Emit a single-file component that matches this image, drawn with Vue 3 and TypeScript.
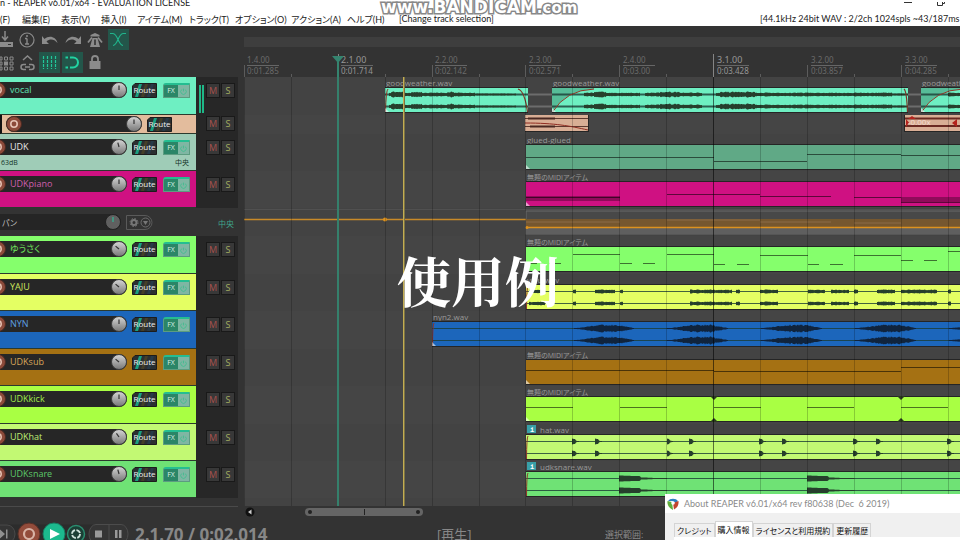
<script setup lang="ts">
type Shape = 'flat' | 'decay' | 'swell'
interface Wave { from: number; to: number; amp: number; shape?: Shape }
interface Note { from: number; to: number; y: number; h?: number }
interface Clip {
  from: number
  to: number
  label?: string
  badge?: boolean
  color?: string
  channels?: boolean
  waves?: Wave[]
  notes?: Note[]
  fadeIn?: number
  fadeOut?: number
  corner?: boolean
  notches?: number[]
}
interface Track {
  kind: 'track' | 'child' | 'envelope'
  name: string
  height: number
  color: string
  text: string
  turn?: number
  volume?: string
  pan?: string
  meter?: boolean
  clips: Clip[]
}

const END = 3000
const ORIGIN = 244
const BEAT = 46.9
const midi = '無題のMIDIアイテム'

const waves = (amp: number, shape: Shape, ...pairs: number[][]): Wave[] =>
  pairs.map(([from, to]) => ({ from, to, amp, shape }))
const notes = (...rows: number[][]): Note[] =>
  rows.map(([from, to, y, h]) => ({ from, to, y, h }))

const tracks: Track[] = [
  {
    kind: 'track', name: 'vocal', height: 38, color: '#6eefc2', text: '#5fe0b4', turn: 0, meter: true,
    clips: [
      {
        from: 385, to: 528, label: 'goodweather.wav', channels: true, fadeIn: 3, fadeOut: 10, corner: true,
        waves: [...waves(3, 'flat', [391, 403], [411, 422], [447, 454]), ...waves(2, 'flat', [389, 475]), ...waves(1, 'flat', [475, 516])],
      },
      {
        from: 552, to: 908, label: 'goodweather.wav', channels: true, fadeIn: 42, fadeOut: 4, corner: true,
        waves: [...waves(2, 'flat', [584, 640], [645, 702], [716, 780]), ...waves(3, 'flat', [594, 606], [660, 680], [720, 755]), ...waves(2, 'flat', [780, 892]), ...waves(1, 'flat', [892, 908])],
      },
      {
        from: 921, to: END, label: 'goodweather.wav', channels: true, fadeIn: 42, corner: true,
        waves: waves(2, 'flat', [948, 1100]),
      },
    ],
  },
  { kind: 'child', name: '', height: 19, color: '#e3bc9d', text: '#e3bc9d', turn: 0, clips: [] },
  {
    kind: 'track', name: 'UDK', height: 37, color: '#9fccb7', text: '#e6e6e6', turn: -15, volume: '63dB', pan: '中央',
    clips: [{ from: 526, to: END, label: 'glued-glued', color: '#60a986', corner: true, notes: notes([526, 714, 12], [714, 807, 16], [807, 901, 9], [901, END, 10]) }],
  },
  {
    kind: 'track', name: 'UDKpiano', height: 37, color: '#cf1182', text: '#cf5fae', turn: 0,
    clips: [{
      from: 526, to: END, label: midi, corner: true,
      notes: notes([526, 620, 14, 5], [526, 620, 15], [667, 760, 12], [760, 784, 14], [784, 831, 14], [854, 901, 15], [901, END, 15, 5], [901, END, 20]),
    }],
  },
  { kind: 'envelope', name: 'パン', height: 28, color: '#333333', text: '#bdbdbd', clips: [] },
  {
    kind: 'track', name: 'ゆうさく', height: 38, color: '#85ff6c', text: '#6fe05c', turn: -50,
    clips: [{
      from: 526, to: END, label: midi, corner: true,
      notes: notes([526, 537, 16], [549, 561, 16], [573, 620, 7], [620, 632, 16], [643, 655, 16], [667, 714, 7], [714, 725, 17], [737, 749, 17], [760, 808, 8], [808, 819, 17], [830, 843, 17], [854, 901, 8], [901, 913, 13], [924, 937, 13], [948, END, 4]),
    }],
  },
  {
    kind: 'track', name: 'YAJU', height: 37, color: '#e4ff63', text: '#d0e85e', turn: -50,
    clips: [{
      from: 526, to: END, label: 'yaju.wav', channels: true, fadeIn: 2,
      waves: waves(2, 'flat', [529, 545], [573, 576], [595, 615], [620, 623], [690, 732], [736, 740], [760, 778], [808, 825], [831, 849], [854, 858], [877, 895], [901, 937], [948, 951]),
    }],
  },
  {
    kind: 'track', name: 'NYN', height: 38, color: '#1c66bb', text: '#5c9fe0', turn: 0,
    clips: [{
      from: 432, to: END, label: 'nyn2.wav', channels: true, fadeIn: 2, corner: true,
      waves: waves(4, 'swell', [574, 634], [667, 728], [761, 822], [855, 916], [949, 1010]),
    }],
  },
  {
    kind: 'track', name: 'UDKsub', height: 37, color: '#a57113', text: '#d9a75a', turn: -50,
    clips: [{ from: 526, to: END, label: midi, corner: true, notes: notes([526, 714, 10], [714, 901, 11], [901, END, 7]) }],
  },
  {
    kind: 'track', name: 'UDKkick', height: 38, color: '#a9ff43', text: '#a0ea4c', turn: 0,
    clips: [{
      from: 526, to: END, label: midi, corner: true, notches: [714, 901],
      notes: notes([526, 573, 10], [620, 667, 10], [714, 761, 10], [807, 854, 10], [901, 948, 10]),
    }],
  },
  {
    kind: 'track', name: 'UDKhat', height: 37, color: '#c2f973', text: '#bfee74', turn: -35,
    clips: [{
      from: 526, to: END, label: 'hat.wav', badge: true, channels: true, fadeIn: 2,
      waves: waves(3, 'decay', [572, 579], [595, 602], [667, 673], [689, 696], [759, 766], [782, 789], [853, 860], [876, 883], [947, 954]),
    }],
  },
  {
    kind: 'track', name: 'UDKsnare', height: 37, color: '#6fe275', text: '#5cc96a', turn: -15,
    clips: [{
      from: 526, to: END, label: 'udksnare.wav', badge: true, channels: true, fadeIn: 2,
      waves: waves(3, 'decay', [619, 667], [807, 854]),
    }],
  },
]

const beats = Array.from({ length: 44 }, (_, i) => Math.round(ORIGIN + i * BEAT))
const marks = [
  { x: 244, bar: '1.4.00', time: '0:01.285', major: false },
  { x: 338, bar: '2.1.00', time: '0:01.714', major: true },
  { x: 432, bar: '2.2.00', time: '0:02.142', major: false },
  { x: 526, bar: '2.3.00', time: '0:02.571', major: false },
  { x: 620, bar: '2.4.00', time: '0:03.00', major: false },
  { x: 714, bar: '3.1.00', time: '0:03.428', major: true },
  { x: 808, bar: '3.2.00', time: '0:03.857', major: false },
  { x: 902, bar: '3.3.00', time: '0:04.285', major: false },
]
const menus = ['(F)', '編集(E)', '表示(V)', '挿入(I)', 'アイテム(M)', 'トラック(T)', 'オプション(O)', 'アクション(A)', 'ヘルプ(H)']
const tabs = ['クレジット', '購入情報', 'ライセンスと利用規約', '更新履歴']

/** Outline of a waveform burst mirrored around the channel line at y. */
function wavePath(w: Wave, y: number): string {
  const top: string[] = []
  const bottom: string[] = []
  for (let x = w.from; x <= w.to; x++) {
    const t = (x - w.from) / (w.to - w.from)
    const hash = Math.abs(Math.sin(x * 127.1) * 43758.5) % 1
    const noise = 0.6 + 0.4 * hash
    let h = w.amp * noise
    if (w.shape === 'swell') h = w.amp * Math.min(1, Math.sin(Math.PI * Math.pow(t, 1.3)) + 0.1) * noise
    if (w.shape === 'decay') h = w.amp * (t < 0.45 ? 1 - t * 0.5 : (1 - t) * 0.7)
    h = Math.max(h, 0.6)
    top.push(`${x},${(y - h).toFixed(1)}`)
    bottom.unshift(`${x},${(y + h).toFixed(1)}`)
  }
  return 'M' + top.concat(bottom).join('L') + 'Z'
}
</script>

<template>
  <div class="app">
    <header class="title">
      <span>n - REAPER v6.01/x64 - EVALUATION LICENSE</span>
      <span class="winctl">
        <button aria-label="Minimize"><svg width="10" height="10"><path d="M1 0.500h8" stroke="#333" /></svg></button>
        <button aria-label="Maximize"><svg width="10" height="10"><path d="M1.500 -3V3.500H6.500V-3M3 -3H8.500V1.500H7" stroke="#333" fill="none" /></svg></button>
      </span>
    </header>
    <nav class="menu">
      <button v-for="m in menus" :key="m">{{ m }}</button>
      <span>[Change track selection]</span>
      <span class="device">[44.1kHz 24bit WAV : 2/2ch 1024spls ~43/187ms Wa</span>
    </nav>

    <main class="work">
      <section class="left">
        <div class="tools">
          <button aria-label="Save"><svg viewBox="0 0 14 21"><path d="M5 2V10M2 7.500L5 11L8 7.500" stroke="#8b8b8b" stroke-width="1.500" fill="none" /><path d="M0 13H13V18H0Z" fill="#8b8b8b" /><path d="M8 15.500h3" stroke="#333" /></svg></button>
          <button aria-label="Info"><svg viewBox="0 0 21 21"><circle cx="11" cy="11" r="7" fill="none" stroke="#8b8b8b" stroke-width="1.200" /><path d="M11 9.500V15M9 9.500h2M9 15h4" stroke="#8b8b8b" stroke-width="1.400" /><circle cx="11" cy="7" r="1" fill="#8b8b8b" /></svg></button>
          <button aria-label="Undo"><svg viewBox="0 0 21 21"><path d="M3 7V15H10L7.500 12.500C11 9.500 15 10 18.500 14C17 7.500 10 6 5.500 10Z" fill="#8b8b8b" /></svg></button>
          <button aria-label="Redo"><svg viewBox="0 0 21 21"><path d="M19 7V15H12L14.500 12.500C11 9.500 7 10 3.500 14C5 7.500 12 6 16.500 10Z" fill="#8b8b8b" /></svg></button>
          <button aria-label="Metronome"><svg viewBox="0 0 21 21"><path d="M5.500 6L10 4L14.500 6V7.500H5.500Z" fill="#8b8b8b" /><path d="M7.500 9H12.500L15 18H5Z" fill="#8b8b8b" /><path d="M3 13.500L7 8.500M17 13.500L13 8.500" stroke="#8b8b8b" stroke-width="1.800" /><path d="M10 10.500V16" stroke="#333" stroke-width="1.600" /></svg></button>
          <button class="on" aria-label="Crossfade"><svg viewBox="0 0 21 21"><path d="M2 4.500H5C10 5 10 16 15 16.500M18 4.500H15C10 5 10 16 5 16.500" stroke="#21b48c" stroke-width="1.200" fill="none" /></svg></button>
          <button aria-label="Grouping"><svg viewBox="0 0 14 21"><path d="M0 5H2V8H0ZM4.500 5H7.500V8H4.500ZM10 5H13V8H10ZM0 10H2V13H0ZM10 10H13V13H10ZM0 15H2V18H0ZM4.500 15H7.500V18H4.500ZM10 15H13V18H10Z" fill="none" stroke="#8b8b8b" /><path d="M4 9.500h4v4h-4z" fill="#8b8b8b" /></svg></button>
          <button aria-label="Ripple"><svg viewBox="0 0 21 21"><path d="M7 8L11.500 4L16 8M10 12.500H7.500A2.500 2.500 0 0 0 7.500 17.500H10M13 12.500H15.500A2.500 2.500 0 0 1 15.500 17.500H13M9 15H14" stroke="#8b8b8b" stroke-width="1.500" fill="none" /></svg></button>
          <button class="on" aria-label="Grid"><svg viewBox="0 0 21 21"><path d="M4.500 4V17M8.500 4V17M12.500 4V17M16.500 4V17" stroke="#21c79a" stroke-width="1.200" stroke-dasharray="3 1" /></svg></button>
          <button class="on" aria-label="Snap"><svg viewBox="0 0 21 21"><path d="M8 5.500H11A5 5 0 0 1 11 15.500H8M3.500 5.500H6M3.500 15.500H6" stroke="#21d3a2" stroke-width="2" fill="none" /></svg></button>
          <button aria-label="Lock"><svg viewBox="0 0 21 21"><path d="M4.500 9H15.500V17H4.500Z" fill="#8b8b8b" /><path d="M7 9V7A3 3 0 0 1 13 7V9" stroke="#8b8b8b" stroke-width="1.800" fill="none" /></svg></button>
        </div>

        <div class="tcp">
          <article v-for="(t, i) in tracks" :key="i" class="track" :class="t.kind" :style="{ height: t.height + 'px' }">
            <template v-if="t.kind !== 'envelope'">
              <div class="strip" :style="{ background: t.color }">
                <div class="controls">
                  <div class="bar">
                    <button class="rec" aria-label="Record arm"><svg viewBox="0 0 16 16"><circle cx="8" cy="8" r="7.500" fill="#8c4a3a" stroke="#4b2a22" /><circle cx="8" cy="8" r="3.200" fill="none" stroke="#e6c2b4" stroke-width="1.600" /></svg></button>
                    <span class="name" :style="{ color: t.text }">{{ t.name }}</span>
                    <label class="knob">
                      <svg viewBox="0 0 16 16"><defs><linearGradient :id="'k' + i" x1="0" y1="0" x2="0" y2="1"><stop offset="0" stop-color="#d6d6d6" /><stop offset="1" stop-color="#777" /></linearGradient></defs><circle cx="8" cy="8" r="7.500" :fill="`url(#k${i})`" stroke="#3c3c3c" /><path d="M8 3.500V8" stroke="#333" stroke-width="1.200" :transform="`rotate(${t.turn} 8 8)`" /></svg>
                      <input type="range" aria-label="Volume">
                    </label>
                  </div>
                  <button class="route">
                    <svg viewBox="0 0 25 15"><path d="M3 0.500H24.500V14.500H0.500V3Z" fill="#2b2f31" stroke="#1c1c1c" /><path d="M7 1h3l-4 13h-3z" fill="#1a9f80" /><path d="M13 1h3l-4 13h-3z" fill="#453f28" /><path d="M19 1h3l-4 13h-3z" fill="#273a48" /></svg>
                    <span>Route</span>
                  </button>
                  <span v-if="t.kind === 'track'" class="fx">
                    <button class="fxlabel">FX</button><button class="fxpower" aria-label="FX bypass"><svg viewBox="0 0 12 14"><path d="M4 5A3 3 0 1 0 8 5M6 4V7" fill="none" stroke="#45bd90" /></svg></button>
                  </span>
                </div>
                <div v-if="t.volume" class="readout"><span>{{ t.volume }}</span><span>{{ t.pan }}</span></div>
              </div>
              <div class="side">
                <div class="meter"><template v-if="t.meter"><i /><i /></template></div>
                <button class="m">M</button><button class="s">S</button>
              </div>
            </template>
            <template v-else>
              <div class="envbar">
                <span>{{ t.name }}</span>
                <label class="knob">
                  <svg viewBox="0 0 16 16"><circle cx="8" cy="8" r="7.500" fill="#606060" stroke="#222" /><path d="M8 3V8" stroke="#2fb896" stroke-width="1.200" /></svg>
                  <input type="range" aria-label="Pan">
                </label>
              </div>
              <button class="envbtn" aria-label="Envelope options"><svg viewBox="0 0 27 15"><path d="M0.500 0.500H19A7 7 0 0 1 19 14.500H0.500Z" fill="none" stroke="#5a5a5a" /><circle cx="8" cy="7.500" r="2.500" fill="none" stroke="#777" stroke-width="2" /><circle cx="8" cy="7.500" r="4" fill="none" stroke="#777" stroke-dasharray="1.600 1.540" /><circle cx="19.500" cy="7.500" r="4.500" fill="none" stroke="#6c6c6c" /><path d="M17 6H22L19.500 10Z" fill="#777" /></svg></button>
              <span class="envval">中央</span>
            </template>
          </article>
        </div>
      </section>

      <section class="arrange">
        <div class="ruler">
          <svg width="100%" height="51">
            <rect y="11" width="100%" height="10" fill="#3e3e3e" />
            <g :transform="`translate(${-ORIGIN})`">
              <path v-for="(x, i) in beats" :key="x" :d="`M${x}.5 ${i % 2 ? 48 : i % 8 === 2 ? 28 : 39}V51`" :stroke="i % 8 === 2 ? '#858585' : '#5c5c5c'" />
              <g v-for="m in marks" :key="m.x" :class="{ major: m.major }" class="mark">
                <text :x="m.x + 3" y="37">{{ m.bar }}</text>
                <path :d="`M${m.x + 3} 39.500h32`" stroke="#666" />
                <text :x="m.x + 3" y="48">{{ m.time }}</text>
              </g>
              <path d="M332 30H344L338 37Z" fill="#35846f" />
              <path d="M338 36V51" stroke="#35846f" stroke-width="2" />
            </g>
          </svg>
        </div>
        <div class="lanes">
          <div v-for="(t, i) in tracks" :key="i" class="lane" :style="{ height: t.height + 'px' }">
            <svg width="100%" height="100%">
              <g :transform="`translate(${-ORIGIN})`">
                <g v-for="c in t.clips" :key="c.from">
                  <text v-if="c.label" class="cliplabel" :class="{ jp: c.label === midi }" :x="c.from + (c.badge ? 14 : 1)" y="9">{{ c.label }}</text>
                  <g v-if="c.badge"><rect :x="c.from + 1" y="1" width="9" height="8" fill="#38a0a8" /><text class="badge" :x="c.from + 4" y="8">i</text></g>
                  <rect :x="c.from" y="10" :width="c.to - c.from" height="26" fill="#252525" />
                  <rect :x="c.from" y="11" :width="c.to - c.from" height="24" :fill="c.color || t.color" />
                  <path v-if="c.fadeIn && c.fadeIn > 10" :d="`M${c.from} 35Q${c.from + 14} 13 ${c.from + c.fadeIn} 12V11H${c.from}Z`" fill="#57bd99" />
                  <g v-if="c.channels" :fill="i === 7 ? '#10243d' : '#263f2c'">
                    <path :d="`M${c.from} 17.500H${c.to}M${c.from} 29.500H${c.to}`" stroke="#1b3d36" :stroke-width="i === 0 ? 2 : 1" opacity="0.8" />
                    <template v-for="w in c.waves" :key="w.from + '-' + w.amp">
                      <path :d="wavePath(w, 17.5)" /><path :d="wavePath(w, 29.5)" />
                    </template>
                  </g>
                  <rect v-for="(n, k) in c.notes" :key="k" :x="n.from" :y="n.y + 11" :width="n.to - n.from" :height="n.h || 1" fill="#000" :opacity="n.h ? 0.3 : 0.55" />
                  <path v-if="c.fadeIn" :d="`M${c.from + 0.5} 35Q${c.from + c.fadeIn / 3} 13 ${c.from + c.fadeIn} 12`" fill="none" stroke="#8f3528" />
                  <path v-if="c.fadeOut" :d="`M${c.to - c.fadeOut} 12Q${c.to - c.fadeOut / 3} 14 ${c.to - 0.5} 35`" fill="none" stroke="#7d3528" stroke-width="1.200" />
                  <path v-if="c.corner" :d="`M${c.from} 31L${c.from + 4} 35H${c.from}Z`" fill="#fff" opacity="0.6" />
                  <path v-for="x in c.notches" :key="x" :d="`M${x - 4} 10H${x + 4}L${x} 14ZM${x - 4} 36H${x + 4}L${x} 32Z`" fill="#2b3a20" />
                </g>
                <g v-if="i === 0"><path d="M528 17.500H552M528 29.500H552M908 17.500H921M908 29.500H921" stroke="#6c6c6c" stroke-width="2" /></g>
                <g v-if="t.kind === 'child'">
                  <rect x="525" y="0" width="64" height="17" fill="#252525" /><rect x="525" y="0" width="63" height="16" fill="#d9ae95" />
                  <path d="M525 3.500H588M525 11.500H588" stroke="#5f3a30" /><path d="M528 3.500H555M530 11.500H555" stroke="#4a2822" stroke-width="2" />
                  <path d="M525 8C555 8 570 11 588 15" fill="none" stroke="#8f2c22" />
                  <rect x="904" y="0" :width="END" height="17" fill="#252525" /><rect x="905" y="0" :width="END" height="16" fill="#d9ae95" />
                  <path d="M905 3.500H3000M905 11H3000" stroke="#6b2a22" stroke-width="2" />
                  <path d="M906 4L909 7.500L906 12ZM957 4V12L952 8ZM908 4L912 1L916 4Z" fill="#b3231d" />
                  <text class="rate" x="908" y="10">-0.00x</text>
                </g>
                <g v-if="t.kind === 'envelope'">
                  <path d="M244 1.500H3000" stroke="#505050" />
                  <rect x="526" y="3" :width="END" height="23" fill="#484848" stroke="#6a6a6a" /><rect x="526" y="20" :width="END" height="6" fill="#5f5f5f" />
                  <rect x="526" y="11" :width="END" height="8" fill="#76572f" />
                  <path d="M526 14H620M667 12H760M760 14H831M854 15H901" stroke="#8b6d48" />
                  <path d="M244 11.500H526" stroke="#c98a28" stroke-width="1.500" /><path d="M526 19.500H3000" stroke="#dd921f" stroke-width="1.500" />
                  <circle cx="385" cy="11.500" r="2" fill="#dd921f" /><circle cx="527" cy="19.500" r="1.500" fill="#dd921f" />
                </g>
              </g>
            </svg>
          </div>
          <svg class="overlay" width="100%" height="100%">
            <g :transform="`translate(${-ORIGIN})`">
              <template v-for="(x, i) in beats" :key="x">
                <rect :x="x" y="0" width="1" height="100%" :opacity="i % 8 === 2 ? 0.55 : 0.2" />
              </template>
              <rect x="337" y="0" width="2" height="100%" fill="#35806c" />
              <rect x="403" y="0" width="1" height="100%" fill="#c4ad52" /><rect x="404" y="0" width="1" height="100%" fill="#7d7444" />
            </g>
          </svg>
        </div>
        <div class="scroll">
          <button aria-label="Scroll left"><svg viewBox="0 0 10 10"><circle cx="5" cy="5" r="4.500" fill="#111" /><path d="M6.500 2.500V7.500L3 5Z" fill="#ccc" /></svg></button>
          <div class="thumb"><i class="dot" /><i class="grip" /><i class="dot" /></div>
        </div>
      </section>
    </main>

    <footer class="transport">
      <svg class="tbuttons" viewBox="0 0 130 28">
        <path d="M0 6.500H118A8 9.500 0 0 1 118 25.500H0Z" fill="#2c2c2c" />
        <path d="M0 7H7A8 9 0 0 1 7 25H0" fill="#343434" stroke="#4a4a4a" /><path d="M0 11.500L5 16L0 20.500ZM6 11.500h1.500v9h-1.500z" fill="#909090" />
        <circle cx="29" cy="16" r="11" fill="#934c3b" stroke="#5a3128" /><circle cx="29" cy="16" r="5" fill="none" stroke="#d8b3a6" stroke-width="2.200" />
        <circle cx="54" cy="16" r="11" fill="#1cba8e" stroke="#167d62" /><path d="M50 11L60 16L50 21Z" fill="#fff" />
        <circle cx="76" cy="16" r="8.500" fill="#1b3f35" stroke="#2a8d6f" stroke-width="1.500" /><circle cx="76" cy="16" r="4" fill="none" stroke="#cfe3dc" stroke-width="1.800" stroke-dasharray="4.800 1.480" />
        <path d="M96 6.500H121A7 9.500 0 0 1 121 25.500H96A7 9.500 0 0 1 96 6.500ZM109 7V25" fill="#353535" stroke="#4c4c4c" />
        <path d="M95 12.500h7v7h-7zM115 12h2.500v8h-2.500zM119 12h2.500v8h-2.500z" fill="#999" />
      </svg>
      <span class="clock">2.1.70 / 0:02.014</span>
      <span class="state">[再生]</span>
      <span class="range">選択範囲:</span>
    </footer>

    <div class="brand"><span class="www">www.</span><span>BANDICAM</span><span class="com">.com</span></div>
    <div class="caption">使用例</div>

    <aside class="about">
      <div class="abouttitle">
        <svg viewBox="0 0 12 14"><path d="M1 4A5.500 4 0 0 1 11 4L9 6L5 4Z" fill="#2d7fc1" /><path d="M0.500 4L5 5L6 13C2 11 0 8 0.500 4Z" fill="#5fae3c" /><path d="M11.500 4L6 6L7 12.500C10 11 12 8 11.500 4Z" fill="#c2452d" /><circle cx="6" cy="6" r="1.800" fill="#fff" /></svg>
        <span>About REAPER v6.01/x64 rev f80638 (Dec &nbsp;6 2019)</span>
      </div>
      <div class="tabs" role="tablist">
        <button v-for="(t, i) in tabs" :key="t" role="tab" :class="{ active: i === 1 }">{{ t }}</button>
      </div>
      <div class="tabpage" />
    </aside>
  </div>
</template>

<style>
body { background: #333; overflow: hidden; }
</style>

<style scoped>
.app { position: relative; display: flex; flex-direction: column; height: 100vh; overflow: hidden; background: #333; font-family: "Open Sans", "Noto Sans CJK JP", sans-serif; }
.app > * { flex: none; }
button { margin: 0; padding: 0; border: 0; background: none; font: inherit; color: inherit; text-align: left; white-space: nowrap; }
svg { display: block; }
.title { display: flex; justify-content: space-between; height: 12px; background: #fff; color: #222; font: 9px/6px Lato, sans-serif; white-space: nowrap; }
.winctl { display: flex; gap: 23px; padding: 2px 14px 0 0; }
.menu { display: grid; grid-template-columns: 22px 39px 40px 36px 52px 46px 56px 56px 52px 1fr 200px; height: 14px; background: #fff; color: #222; font: 9px/13px Lato, "Noto Sans CJK JP", sans-serif; font-feature-settings: "palt"; white-space: nowrap; overflow: hidden; }
.work { display: grid; grid-template-columns: 244px 1fr; }
.arrange { min-width: 0; }
.tools { display: grid; grid-template-columns: 14px repeat(5, 21px); grid-auto-rows: 21px; gap: 2px; height: 48px; padding-top: 3px; }
.tools svg { height: 21px; }
.on { background: #23564a; }
.tcp { margin-right: 6px; padding-bottom: 8px; border-bottom: 1px solid #4a4a4a; }
.track { display: flex; background: #272727; overflow: hidden; }
.strip { width: 196px; box-sizing: border-box; border-bottom: 1px solid #2b3a2e; display: flex; flex-direction: column; }
.controls { display: flex; align-items: center; padding-top: 5px; height: 16px; }
.bar { display: flex; align-items: center; width: 127px; height: 16px; background: #262626; border-radius: 0 8px 8px 0; margin-right: 5px; }
.rec { width: 6px; height: 16px; display: flex; justify-content: flex-end; overflow: hidden; }
.rec svg { width: 16px; height: 16px; flex: none; }
.name { flex: 1; padding-left: 4px; font-size: 9px; line-height: 16px; font-feature-settings: "palt"; }
.knob { position: relative; width: 16px; height: 16px; }
.knob input { position: absolute; inset: 0; width: 100%; margin: 0; opacity: 0; }
.route { position: relative; width: 25px; height: 15px; margin-right: 6px; }
.route span { position: absolute; inset: 0; text-align: center; font-size: 8px; line-height: 14px; color: #eee; }
.fx { display: flex; width: 27px; height: 15px; box-sizing: border-box; border: 1px solid #5c9c80; border-top: 2px solid #25bd91; border-radius: 3px 0 0 0; background: #2b8567; color: #d9efe6; font-size: 7px; line-height: 12px; }
.fxlabel { width: 14px; text-align: center; }
.fxpower { flex: 1; background: #ffffff66; }
.readout { display: flex; justify-content: space-between; padding: 1px 7px 0 1px; font-size: 7px; line-height: 14px; color: #14352a; }
.side { display: flex; padding-top: 6px; }
.meter { display: flex; gap: 1px; width: 10px; height: 30px; box-sizing: border-box; padding: 2px 0 0 3px; }
.meter i { width: 2px; height: 28px; background: #1fb787; }
.side button { width: 14px; height: 15px; box-sizing: border-box; margin-right: 1px; background: #383838; border: 1px solid #191919; text-align: center; font-size: 9px; line-height: 13px; }
.side .m { color: #a8504c; }
.side .s { color: #a3ae60; }
.child .strip { border-left: 2px solid #111; }
.child .controls { padding: 1px 0 0 4px; }
.child .bar { width: 136px; border-radius: 8px; }
.child .rec { width: 16px; }
.child .side { padding-top: 1px; }
.envelope { background: #333; align-items: center; }
.envbar { display: flex; align-items: center; justify-content: space-between; width: 121px; height: 16px; background: #252525; border-radius: 0 8px 8px 0; color: #bdbdbd; font-size: 8px; font-feature-settings: "palt"; }
.envbar span { padding-left: 2px; }
.envbtn { width: 27px; margin-left: 5px; }
.envval { flex: 1; padding: 4px 4px 0 0; text-align: right; font-size: 8px; line-height: 12px; color: #3fa58c; }
.ruler { height: 51px; }
.mark text { font: 8px "Noto Sans", sans-serif; fill: #6a6a6a; }
.mark.major text { fill: #969696; }
.mark.major text:first-child { font-size: 9px; }
.lanes { position: relative; padding-bottom: 8px; background: #434343; }
.lane:nth-child(even) { background: #454545; }
.overlay { position: absolute; inset: 0; }
.cliplabel { font-size: 8px; fill: #999; font-feature-settings: "palt"; }
.cliplabel.jp { font-size: 7px; }
.badge { font: bold 7px "Liberation Mono", monospace; fill: #fff; }
.rate { font-size: 8px; fill: #f4dcd0; }
.scroll { display: flex; align-items: center; height: 12px; padding-left: 1px; }
.scroll button { width: 10px; height: 10px; }
.thumb { display: flex; align-items: center; justify-content: space-between; width: 112px; height: 8px; margin-left: 50px; padding: 0 3px; background: #656565; border-radius: 4px; }
.dot { width: 4px; height: 4px; border-radius: 2px; background: #222; }
.grip { width: 1px; height: 6px; background: #222; }
.transport { display: flex; align-items: flex-start; color: #878787; white-space: nowrap; }
.tbuttons { width: 130px; height: 28px; margin-right: 5px; flex: none; }
.clock { width: 302px; font: bold 17px/34px "Open Sans", sans-serif; }
.state { width: 168px; font-size: 13px; line-height: 33px; }
.range { font-size: 9px; line-height: 34px; }
.brand { position: absolute; top: 0; left: 381px; display: flex; align-items: baseline; font: bold 17px/15px "DejaVu Sans", sans-serif; color: #fff; -webkit-text-stroke: 3px #888; paint-order: stroke fill; }
.com { font-size: 15px; }
.caption { position: absolute; top: 250px; left: 397px; font: bold 54px/60px "Noto Serif CJK JP", "Noto Sans CJK JP", serif; color: #fff; }
.about { position: absolute; top: 494px; left: 665px; right: 0; height: 60px; background: #f0f0f0; }
.abouttitle { display: flex; align-items: center; gap: 5px; height: 19px; padding-left: 2px; background: #fff; color: #8a8a8a; font: 9px/19px Lato, sans-serif; white-space: nowrap; }
.abouttitle svg { width: 12px; height: 14px; }
.tabs { display: flex; align-items: flex-end; height: 24px; padding: 0 9px; color: #111; font-size: 8px; font-feature-settings: "palt"; }
.tabs button { box-sizing: border-box; height: 14px; padding: 0 2px; border: 1px solid #d4d4d4; border-bottom: 0; line-height: 13px; }
.tabs .active { height: 16px; background: #fff; }
.tabpage { height: 17px; margin-left: 9px; background: #fff; }
</style>
